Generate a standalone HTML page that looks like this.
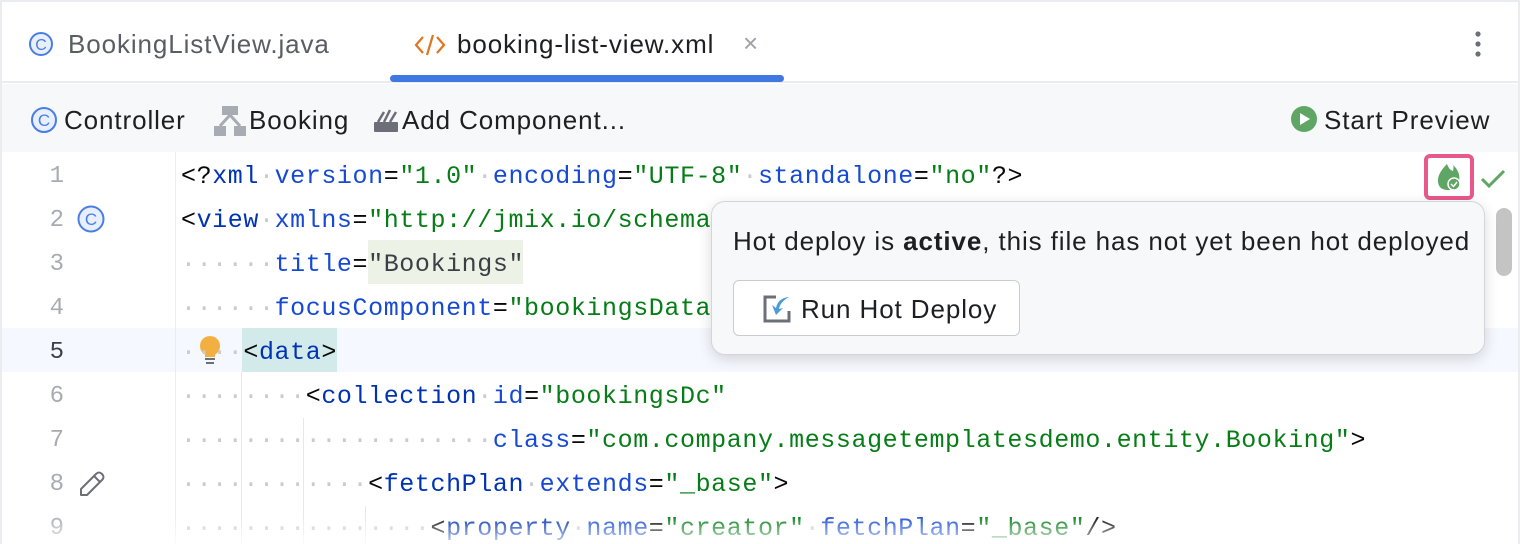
<!DOCTYPE html>
<html><head><meta charset="utf-8"><style>
*{margin:0;padding:0;box-sizing:border-box}
body{width:1520px;height:544px;overflow:hidden;background:#ebecf0;font-family:"Liberation Sans",sans-serif;position:relative}
#win{position:absolute;left:2px;top:2px;width:1516px;height:542px;background:#fff;overflow:hidden}
.tabs{position:absolute;left:0;top:0;width:100%;height:81px;background:#fff;border-bottom:2px solid #ebecf0}
.tab{position:absolute;top:27px;font-size:26px;letter-spacing:.9px;color:#5a5d63}
.ul{position:absolute;left:388px;top:73px;width:394px;height:7px;background:#3f78e0;border-radius:4px}
.tb{position:absolute;left:0;top:82px;width:100%;height:68px;background:#f7f8fa}
.tb span{position:absolute;top:21px;font-size:26px;letter-spacing:.9px;color:#1e1f22}
.ed{position:absolute;left:0;top:150px;width:100%;height:392px}
.ln{position:absolute;left:0;width:62px;text-align:right;font-family:"Liberation Mono",monospace;font-size:24px;color:#a8abb2;line-height:44px}
.code{position:absolute;left:179px;font-family:"Liberation Mono",monospace;font-size:25px;letter-spacing:.59px;line-height:44px;white-space:pre;color:#080808}
.d{color:#c9cbd0}.t{color:#0033b3}.a{color:#174ad4}.v{color:#067d17}
.guide{position:absolute;width:1px;background:#e6e7ea}
.pop{position:absolute;left:709px;top:199px;width:774px;height:154px;background:#f7f8fa;border:1px solid #d3d5da;border-radius:14px;box-shadow:0 4px 14px rgba(0,0,0,.15)}
.btn{position:absolute;left:21px;top:78px;width:287px;height:56px;background:#fff;border:1.5px solid #c9ccd4;border-radius:6px}
</style></head><body><div id="win">
<div class="tabs">
 <svg style="position:absolute;left:26px;top:29px" width="26" height="26" viewBox="0 0 26 26"><circle cx="13" cy="13" r="11" fill="#e8effd" stroke="#4a7ee6" stroke-width="2"/><text x="13" y="19" font-size="16" text-anchor="middle" fill="#4a7ee6" font-family="Liberation Sans">C</text></svg>
 <div class="tab" style="left:66px">BookingListView.java</div>
 <svg style="position:absolute;left:412px;top:30px" width="32" height="26" viewBox="0 0 32 26"><path d="M9 5 L2 13 L9 21 M23 5 L30 13 L23 21 M19 3 L13 23" stroke="#e0741f" stroke-width="2.2" fill="none"/></svg>
 <div class="tab" style="left:455px;color:#1e1f22">booking-list-view.xml</div>
 <div class="tab" style="left:741px;color:#9ea1a8;top:26px">×</div>
 <svg style="position:absolute;left:1472px;top:28px" width="8" height="28"><circle cx="4" cy="4" r="2.6" fill="#6c6f77"/><circle cx="4" cy="14" r="2.6" fill="#6c6f77"/><circle cx="4" cy="24" r="2.6" fill="#6c6f77"/></svg>
 <div class="ul"></div>
</div>
<div class="tb">
 <svg style="position:absolute;left:28px;top:22px" width="28" height="28" viewBox="0 0 28 28"><circle cx="14" cy="14" r="12" fill="#e8effd" stroke="#4a7ee6" stroke-width="2"/><text x="14" y="20" font-size="17" text-anchor="middle" fill="#4a7ee6" font-family="Liberation Sans">C</text></svg>
 <span style="left:62px">Controller</span>
 <svg style="position:absolute;left:212px;top:22px" width="32" height="30"><rect x="8" y="0" width="16" height="9" fill="#a7abb2"/><rect x="0" y="20" width="12" height="10" fill="#a7abb2"/><rect x="20" y="20" width="12" height="10" fill="#a7abb2"/><path d="M16 9 L6 20 M16 9 L26 20" stroke="#a7abb2" stroke-width="3"/></svg>
 <span style="left:247px">Booking</span>
 <svg style="position:absolute;left:372px;top:24px" width="28" height="26"><rect x="0" y="14" width="24" height="10" rx="1" fill="#6c6f77"/><path d="M4 14 L10 4 M10 14 L16 2 M16 14 L22 4" stroke="#6c6f77" stroke-width="2.5"/></svg>
 <span style="left:400px">Add Component...</span>
 <svg style="position:absolute;left:1288px;top:21px" width="28" height="28"><circle cx="14" cy="14" r="13" fill="#5fa665"/><path d="M10 8 L20 14 L10 20Z" fill="#fff"/></svg>
 <span style="left:1322px">Start Preview</span>
</div>
<div class="ed">
 <div style="position:absolute;left:0;top:176px;width:100%;height:44px;background:#f5f8fe"></div>
 <div style="position:absolute;left:173px;top:0;width:1px;height:392px;background:#ebecf0"></div>
 <div class="ln" style="top:3px">1</div><div class="ln" style="top:47px">2</div><div class="ln" style="top:91px">3</div><div class="ln" style="top:135px">4</div><div class="ln" style="top:179px;color:#3c3f45">5</div><div class="ln" style="top:223px">6</div><div class="ln" style="top:267px">7</div><div class="ln" style="top:311px">8</div><div class="ln" style="top:355px">9</div>
 <svg style="position:absolute;left:75px;top:53px" width="28" height="28"><circle cx="14" cy="14" r="12.5" fill="#e8effd" stroke="#4a7ee6" stroke-width="2"/><text x="14" y="20" font-size="17" text-anchor="middle" fill="#4a7ee6" font-family="Liberation Sans">C</text></svg>
 <svg style="position:absolute;left:76px;top:318px" width="28" height="28"><path d="M3 25 L3 19 L18 4 Q21 1 24 4 Q27 7 24 10 L9 25 Z M16 6 L22 12" stroke="#6c6f77" stroke-width="2" fill="none" stroke-linejoin="round"/></svg>
 <svg style="position:absolute;left:197px;top:184px" width="22" height="30"><circle cx="11" cy="10" r="10" fill="#f2b043"/><rect x="6" y="18" width="10" height="3" fill="#f2b043"/><rect x="6" y="22" width="10" height="2" fill="#6c6f77"/><rect x="7" y="26" width="8" height="2" fill="#6c6f77"/></svg>
 <div style="position:absolute;left:240px;top:176px;width:95px;height:44px;background:#d2ebea"></div>
 <div style="position:absolute;left:366px;top:88px;width:155px;height:44px;background:#ecf3e6"></div>
 <div class="guide" style="left:239px;top:220px;height:172px"></div>
 <div class="guide" style="left:301px;top:266px;height:126px"></div>
 <div class="guide" style="left:363px;top:354px;height:38px"></div>
 <div style="position:absolute;left:0;top:3px;width:100%;height:400px">
 <div class="code" style="top:0">&lt;?<span class="t">xml</span><span class="d">·</span><span class="a">version</span>=<span class="v">"1.0"</span><span class="d">·</span><span class="a">encoding</span>=<span class="v">"UTF-8"</span><span class="d">·</span><span class="a">standalone</span>=<span class="v">"no"</span>?&gt;</div>
 <div class="code" style="top:44px">&lt;<span class="t">view</span><span class="d">·</span><span class="a">xmlns</span>=<span class="v">"http://jmix.io/schema/flowui/view"</span></div>
 <div class="code" style="top:88px"><span class="d">······</span><span class="a">title</span>=<span class="v" style="color:#3c3f45">"Bookings"</span></div>
 <div class="code" style="top:132px"><span class="d">······</span><span class="a">focusComponent</span>=<span class="v">"bookingsDataGrid"</span>&gt;</div>
 <div class="code" style="top:176px"><span class="d">····</span>&lt;<span class="t">data</span>&gt;</div>
 <div class="code" style="top:220px"><span class="d">········</span>&lt;<span class="t">collection</span><span class="d">·</span><span class="a">id</span>=<span class="v">"bookingsDc"</span></div>
 <div class="code" style="top:264px"><span class="d">····················</span><span class="a">class</span>=<span class="v">"com.company.messagetemplatesdemo.entity.Booking"</span>&gt;</div>
 <div class="code" style="top:308px"><span class="d">············</span>&lt;<span class="t">fetchPlan</span><span class="d">·</span><span class="a">extends</span>=<span class="v">"_base"</span>&gt;</div>
 <div class="code" style="top:352px"><span class="d">················</span>&lt;<span class="t">property</span><span class="d">·</span><span class="a">name</span>=<span class="v">"creator"</span><span class="d">·</span><span class="a">fetchPlan</span>=<span class="v">"_base"</span>/&gt;</div>
 </div>
 <div style="position:absolute;left:0;top:362px;width:100%;height:30px;background:linear-gradient(rgba(255,255,255,0),rgba(255,255,255,.8))"></div>
 <div style="position:absolute;left:1422px;top:2px;width:50px;height:46px;border:4px solid #e8588a;border-radius:6px"></div>
 <svg style="position:absolute;left:1433px;top:10px" width="28" height="30" viewBox="0 0 28 30"><path d="M12 2 Q14 8 18 9 Q19 5 18 3 Q26 10 24 20 Q22 28 13 28 Q4 28 3 20 Q2 12 12 2Z" fill="#5fa665"/><circle cx="19" cy="22" r="6" fill="#5fa665" stroke="#fff" stroke-width="1.5"/><path d="M16 22 L18.5 24.5 L22 20" stroke="#fff" stroke-width="1.5" fill="none"/></svg>
 <svg style="position:absolute;left:1478px;top:16px" width="26" height="22"><path d="M2 11 L9 18 L24 3" stroke="#5fa665" stroke-width="3" fill="none"/></svg>
 <div style="position:absolute;left:1494px;top:56px;width:16px;height:68px;background:#c4c4c4;border-radius:8px"></div>
</div>
<div class="pop">
 <div style="position:absolute;left:21px;top:24px;font-size:26px;letter-spacing:.9px;color:#1e1f22;white-space:nowrap">Hot deploy is <b>active</b>, this file has not yet been hot deployed</div>
 <div class="btn">
  <svg style="position:absolute;left:28px;top:13px" width="30" height="30" viewBox="0 0 30 30"><path d="M14 3 L3 3 L3 27 L27 27 L27 17" stroke="#6c6f77" stroke-width="3" fill="none"/><path d="M27 3 Q16 4 14 14 L10 11 L14 21 L21 14 L17 15 Q18 8 27 3Z" fill="#4a9bd8"/></svg>
  <div style="position:absolute;left:67px;top:13px;font-size:26px;letter-spacing:.9px;color:#1e1f22;white-space:nowrap">Run Hot Deploy</div>
 </div>
</div>
</div></body></html>
